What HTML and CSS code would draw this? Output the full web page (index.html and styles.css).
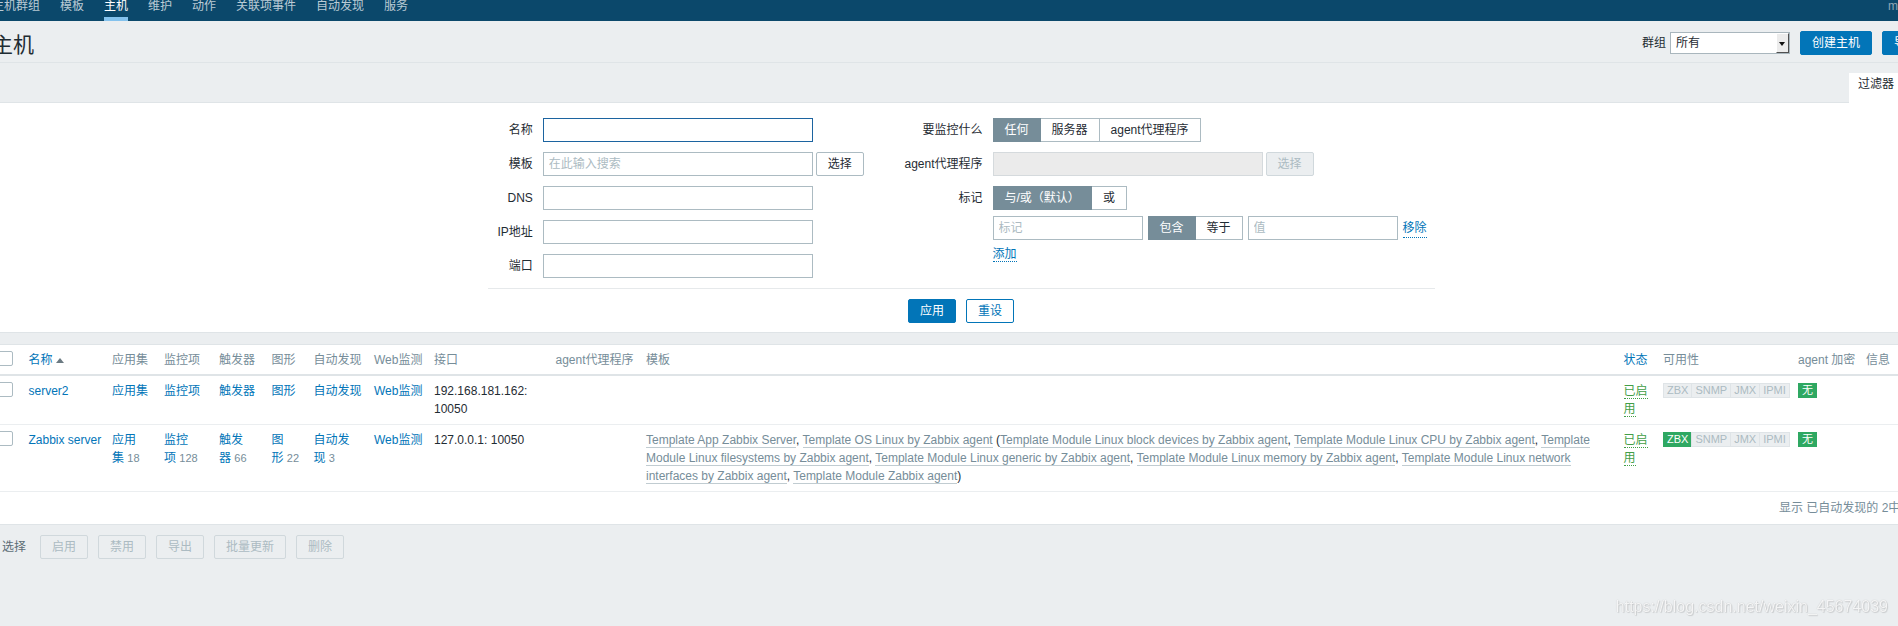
FILE: index.html
```html
<!DOCTYPE html>
<html lang="zh-CN">
<head>
<meta charset="utf-8">
<title>主机</title>
<link rel="stylesheet" href="styles.css">
</head>
<body>
<div class="page">
  <nav class="subnav">
    <ul class="subnav-list">
      <li class="subnav-item"><a class="subnav-link">主机群组</a></li>
      <li class="subnav-item"><a class="subnav-link">模板</a></li>
      <li class="subnav-item"><a class="subnav-link is-active">主机</a></li>
      <li class="subnav-item"><a class="subnav-link">维护</a></li>
      <li class="subnav-item"><a class="subnav-link">动作</a></li>
      <li class="subnav-item"><a class="subnav-link">关联项事件</a></li>
      <li class="subnav-item"><a class="subnav-link">自动发现</a></li>
      <li class="subnav-item"><a class="subnav-link">服务</a></li>
    </ul>
    <span class="subnav-right">m</span>
  </nav>

  <header class="header">
    <h1 class="title">主机</h1>
    <div class="header-controls">
      <span class="header-label">群组</span>
      <div class="select"><span class="select-text">所有</span><span class="select-arrow"></span></div>
      <button class="btn">创建主机</button>
      <button class="btn">导入</button>
    </div>
  </header>

  <div class="filter-tabs">
    <div class="filter-tab">过滤器</div>
  </div>

  <section class="filter">
    <div class="filter-cols">
      <div class="fgrid fgrid-left">
        <span class="flabel">名称</span>
        <div class="fctl"><input class="input input-focus" type="text"></div>
        <span class="flabel">模板</span>
        <div class="fctl"><input class="input" type="text" placeholder="在此输入搜索"><button class="btn btn-grey">选择</button></div>
        <span class="flabel">DNS</span>
        <div class="fctl"><input class="input" type="text"></div>
        <span class="flabel">IP地址</span>
        <div class="fctl"><input class="input" type="text"></div>
        <span class="flabel">端口</span>
        <div class="fctl"><input class="input" type="text"></div>
      </div>
      <div class="fgrid fgrid-right">
        <span class="flabel">要监控什么</span>
        <div class="fctl">
          <div class="seg">
            <span class="seg-item is-on">任何</span>
            <span class="seg-item">服务器</span>
            <span class="seg-item">agent代理程序</span>
          </div>
        </div>
        <span class="flabel">agent代理程序</span>
        <div class="fctl"><input class="input input-disabled" type="text" disabled><button class="btn btn-disabled">选择</button></div>
        <span class="flabel">标记</span>
        <div class="fctl-col">
          <div class="seg">
            <span class="seg-item is-on">与/或（默认）</span>
            <span class="seg-item">或</span>
          </div>
          <div class="tag-row">
            <input class="input input-tag" type="text" placeholder="标记">
            <div class="seg">
              <span class="seg-item is-on">包含</span>
              <span class="seg-item">等于</span>
            </div>
            <input class="input input-tag" type="text" placeholder="值">
            <a class="link-action">移除</a>
          </div>
          <div class="tag-add"><a class="link-action">添加</a></div>
        </div>
      </div>
    </div>
    <div class="filter-sep"></div>
    <div class="filter-actions">
      <button class="btn">应用</button>
      <button class="btn btn-alt">重设</button>
    </div>
  </section>

  <section class="list">
    <table class="list-table">
      <colgroup>
        <col class="c-check"><col class="c-name"><col class="c-apps"><col class="c-items"><col class="c-trig"><col class="c-graph"><col class="c-disc"><col class="c-web"><col class="c-iface"><col class="c-proxy"><col class="c-tpl"><col class="c-status"><col class="c-avail"><col class="c-enc"><col class="c-info">
      </colgroup>
      <thead>
        <tr>
          <th><span class="cb"></span></th>
          <th><a class="link">名称</a><span class="arrow-up"></span></th>
          <th>应用集</th>
          <th>监控项</th>
          <th>触发器</th>
          <th>图形</th>
          <th>自动发现</th>
          <th>Web监测</th>
          <th>接口</th>
          <th>agent代理程序</th>
          <th>模板</th>
          <th><a class="link">状态</a></th>
          <th>可用性</th>
          <th>agent 加密</th>
          <th>信息</th>
        </tr>
      </thead>
      <tbody>
        <tr>
          <td><span class="cb"></span></td>
          <td><a class="link">server2</a></td>
          <td><a class="link">应用集</a></td>
          <td><a class="link">监控项</a></td>
          <td><a class="link">触发器</a></td>
          <td><a class="link">图形</a></td>
          <td><a class="link">自动发现</a></td>
          <td><a class="link">Web监测</a></td>
          <td>192.168.181.162: 10050</td>
          <td></td>
          <td></td>
          <td><a class="link-status">已启用</a></td>
          <td><span class="badges"><span class="badge">ZBX</span><span class="badge">SNMP</span><span class="badge">JMX</span><span class="badge">IPMI</span></span></td>
          <td><span class="badge-enc">无</span></td>
          <td></td>
        </tr>
        <tr>
          <td><span class="cb"></span></td>
          <td><a class="link">Zabbix server</a></td>
          <td><a class="link">应用集</a>&nbsp;<span class="count">18</span></td>
          <td><a class="link">监控项</a>&nbsp;<span class="count">128</span></td>
          <td><a class="link">触发器</a>&nbsp;<span class="count">66</span></td>
          <td><a class="link">图形</a>&nbsp;<span class="count">22</span></td>
          <td><a class="link">自动发现</a>&nbsp;<span class="count">3</span></td>
          <td><a class="link">Web监测</a></td>
          <td>127.0.0.1: 10050</td>
          <td></td>
          <td><a class="link-grey">Template App Zabbix Server</a>, <a class="link-grey">Template OS Linux by Zabbix agent</a> (<a class="link-grey">Template Module Linux block devices by Zabbix agent</a>, <a class="link-grey">Template Module Linux CPU by Zabbix agent</a>, <a class="link-grey">Template Module Linux filesystems by Zabbix agent</a>, <a class="link-grey">Template Module Linux generic by Zabbix agent</a>, <a class="link-grey">Template Module Linux memory by Zabbix agent</a>, <a class="link-grey">Template Module Linux network interfaces by Zabbix agent</a>, <a class="link-grey">Template Module Zabbix agent</a>)</td>
          <td><a class="link-status">已启用</a></td>
          <td><span class="badges"><span class="badge badge-on">ZBX</span><span class="badge">SNMP</span><span class="badge">JMX</span><span class="badge">IPMI</span></span></td>
          <td><span class="badge-enc">无</span></td>
          <td></td>
        </tr>
      </tbody>
    </table>
    <div class="paging">显示 已自动发现的 2中的2</div>
  </section>

  <div class="actions">
    <span class="selected-count">0 选择</span>
    <button class="btn btn-disabled">启用</button>
    <button class="btn btn-disabled">禁用</button>
    <button class="btn btn-disabled">导出</button>
    <button class="btn btn-disabled">批量更新</button>
    <button class="btn btn-disabled">删除</button>
  </div>
</div>
<div class="watermark">https://blog.csdn.net/weixin_45674039</div>
</body>
</html>
```

FILE: styles.css
```css
* { box-sizing: border-box; }

html, body {
  margin: 0;
  padding: 0;
  background: #ebeef0;
  overflow: hidden;
}

body {
  font-family: "Liberation Sans", Arial, "Noto Sans CJK SC", sans-serif;
  font-size: 12px;
  line-height: 18px;
  color: #1f2c33;
}

.page {
  margin-left: -18px;
  width: 1958px;
}

/* top sub navigation */
.subnav {
  display: flex;
  height: 21px;
  background: #0b486b;
}
.subnav-list {
  display: flex;
  list-style: none;
  margin: 0;
  padding: 0;
}
.subnav-item { padding: 0 10px; }
.subnav-link {
  display: block;
  height: 21px;
  line-height: 12px;
  color: rgba(255, 255, 255, 0.72);
  text-decoration: none;
}
.subnav-link.is-active {
  color: #fff;
  border-bottom: 4px solid #84c2ed;
}
.subnav-right {
  margin-left: auto;
  width: 52px;
  padding-right: 10px;
  line-height: 12px;
  color: #8fa6b5;
}

/* header */
.header {
  display: flex;
  align-items: center;
  height: 42px;
  padding: 3px 10px 0;
  border-bottom: 1px solid #dfe4e7;
}
.title {
  margin: 0;
  padding-top: 4px;
  font-size: 21px;
  line-height: 24px;
  font-weight: normal;
  color: #1f2c33;
}
.header-controls {
  display: flex;
  align-items: center;
  margin-left: auto;
}
.header-label { margin-right: 4px; }
.select {
  display: flex;
  width: 120px;
  height: 22px;
  margin-right: 10px;
  border: 1px solid #a9b6bd;
  background: #fff;
}
.select-text {
  padding-left: 5px;
  line-height: 20px;
}
.select-arrow {
  margin-left: auto;
  width: 13px;
  height: 20px;
  display: flex;
  justify-content: center;
  padding-top: 8px;
  background: #ececec;
  border-top: 1px solid #fff;
  border-left: 1px solid #fff;
  border-right: 1px solid #505050;
  border-bottom: 1px solid #505050;
}
.select-arrow::after {
  content: "";
  width: 0;
  height: 0;
  border-left: 3px solid transparent;
  border-right: 3px solid transparent;
  border-top: 4px solid #111;
}

/* buttons */
.btn {
  height: 24px;
  padding: 0 11px;
  margin: 0;
  border: 1px solid #0275b8;
  border-radius: 2px;
  background: #0275b8;
  color: #fff;
  font: inherit;
  font-size: 12px;
  line-height: 22px;
  white-space: nowrap;
}
.header-controls .btn + .btn { margin-left: 10px; }
.btn-alt {
  background: #fff;
  color: #0275b8;
}
.btn-grey {
  background: #fff;
  border-color: #acbbc2;
  color: #1f2c33;
}
.btn-disabled {
  background: #ebeef0;
  border-color: #d0d8dc;
  color: #acbbc2;
}

/* filter */
.filter-tabs {
  display: flex;
  justify-content: flex-end;
  padding: 10px 10px 0;
}
.filter-tab {
  position: relative;
  z-index: 1;
  width: 81px;
  height: 30px;
  margin-bottom: -1px;
  padding: 2px 0 0 9px;
  background: #fff;
}
.filter {
  background: #fff;
  border-top: 1px solid #dfe4e7;
  border-bottom: 1px solid #dfe4e7;
  padding: 15px 0 9px;
}
.filter-cols {
  display: flex;
  width: 947px;
  margin: 0 auto;
}
.fgrid {
  display: grid;
  grid-template-columns: max-content auto;
  column-gap: 10px;
  row-gap: 10px;
  padding-left: 10px;
  align-content: start;
}
.fgrid-left { width: 407px; }
.fgrid-right { flex: 1; }
.flabel {
  text-align: right;
  line-height: 24px;
  white-space: nowrap;
}
.fctl {
  display: flex;
  gap: 3px;
  justify-self: start;
}
.fctl-col { justify-self: start; }

.input {
  width: 270px;
  height: 24px;
  margin: 0;
  padding: 0 5px;
  border: 1px solid #acbbc2;
  border-radius: 0;
  background: #fff;
  font: inherit;
  color: #1f2c33;
  outline: none;
}
.input::placeholder { color: #acbbc2; }
.input-focus { border-color: #1c64a0; }
.input-disabled {
  background: #ebebeb;
  border-color: #d5dadd;
}
.input-tag { width: 150px; }

.seg { display: inline-flex; }
.seg-item {
  height: 24px;
  padding: 0 11px;
  border: 1px solid #acbbc2;
  line-height: 22px;
  background: #fff;
  white-space: nowrap;
}
.seg-item + .seg-item { border-left: none; }
.seg-item.is-on {
  background: #768d99;
  border-color: #768d99;
  color: #fff;
}

.tag-row {
  display: flex;
  align-items: center;
  gap: 5px;
  margin-top: 6px;
}
.tag-add { margin-top: 5px; }

.link-action {
  color: #0275b8;
  border-bottom: 1px dotted #0275b8;
  text-decoration: none;
}

.filter-sep {
  width: 947px;
  margin: 10px auto 0;
  border-top: 1px solid #e6e9eb;
}
.filter-actions {
  display: flex;
  justify-content: center;
  gap: 10px;
  margin-top: 10px;
}

/* list */
.list {
  margin: 11px 10px 0;
  background: #fff;
  border-top: 1px solid #dfe4e7;
  border-bottom: 1px solid #dfe4e7;
}
.list-table {
  width: 100%;
  table-layout: fixed;
  border-collapse: separate;
  border-spacing: 0;
}
.c-check { width: 31.5px; }
.c-name { width: 83.5px; }
.c-apps { width: 52px; }
.c-items { width: 55px; }
.c-trig { width: 52.5px; }
.c-graph { width: 42px; }
.c-disc { width: 60.5px; }
.c-web { width: 60px; }
.c-iface { width: 121.5px; }
.c-proxy { width: 90.5px; }
.c-tpl { width: 977.5px; }
.c-status { width: 39.5px; }
.c-avail { width: 135px; }
.c-enc { width: 68px; }
.c-info { width: 69px; }

.list-table th {
  padding: 6px 5px 5px;
  text-align: left;
  font-weight: normal;
  color: #768d99;
  vertical-align: top;
  white-space: nowrap;
  border-bottom: 2px solid #dfe4e7;
}
.list-table td {
  padding: 6px 5px;
  vertical-align: top;
  border-bottom: 1px solid #ebeef0;
}

.cb {
  display: block;
  width: 15px;
  height: 15px;
  margin-left: 1px;
  border: 1px solid #acbbc2;
  border-radius: 2px;
  background: #fff;
}

.link {
  color: #0275b8;
  text-decoration: none;
}
.arrow-up {
  display: inline-block;
  margin-left: 3px;
  vertical-align: 1px;
  width: 0;
  height: 0;
  border-left: 4px solid transparent;
  border-right: 4px solid transparent;
  border-bottom: 5px solid #6b7a82;
}
.count {
  font-size: 11px;
  color: #768d99;
}
.link-grey {
  color: #768d99;
  text-decoration: none;
  border-bottom: 1px solid rgba(118, 141, 153, 0.45);
}
.link-status {
  color: #429e47;
  text-decoration: none;
  border-bottom: 1px dotted #429e47;
}

.badges {
  display: inline-flex;
  vertical-align: top;
  margin-top: 1px;
}
.badge {
  height: 15px;
  padding: 0 3px;
  border: 1px solid #dfe4e7;
  background: #ebeef0;
  color: #acbbc2;
  font-size: 11px;
  line-height: 13px;
}
.badge + .badge { border-left: 1px solid #dfe4e7; margin-left: -1px; }
.badge-on {
  background: #2fa862;
  border-color: #2fa862;
  color: #fff;
}
.badge-enc {
  display: inline-block;
  vertical-align: top;
  margin-top: 1px;
  height: 15px;
  padding: 0 3px;
  border: 1px solid #2fa862;
  background: #2fa862;
  color: #fff;
  font-size: 11px;
  line-height: 13px;
}

.paging {
  padding: 7px 11px 7px 5px;
  text-align: right;
  color: #768d99;
}

/* bottom actions */
.actions {
  display: flex;
  align-items: center;
  gap: 10px;
  padding: 10px 10px;
}
.selected-count {
  margin-right: 4px;
  color: #5c6d76;
}

.watermark {
  position: fixed;
  right: 10px;
  bottom: 10px;
  font-family: "Liberation Sans", Arial, sans-serif;
  font-size: 16px;
  line-height: 18px;
  color: rgba(255, 255, 255, 0.85);
  text-shadow: 0 0 1px rgba(0, 0, 0, 0.25), 1px 1px 1px rgba(0, 0, 0, 0.12);
}
```
